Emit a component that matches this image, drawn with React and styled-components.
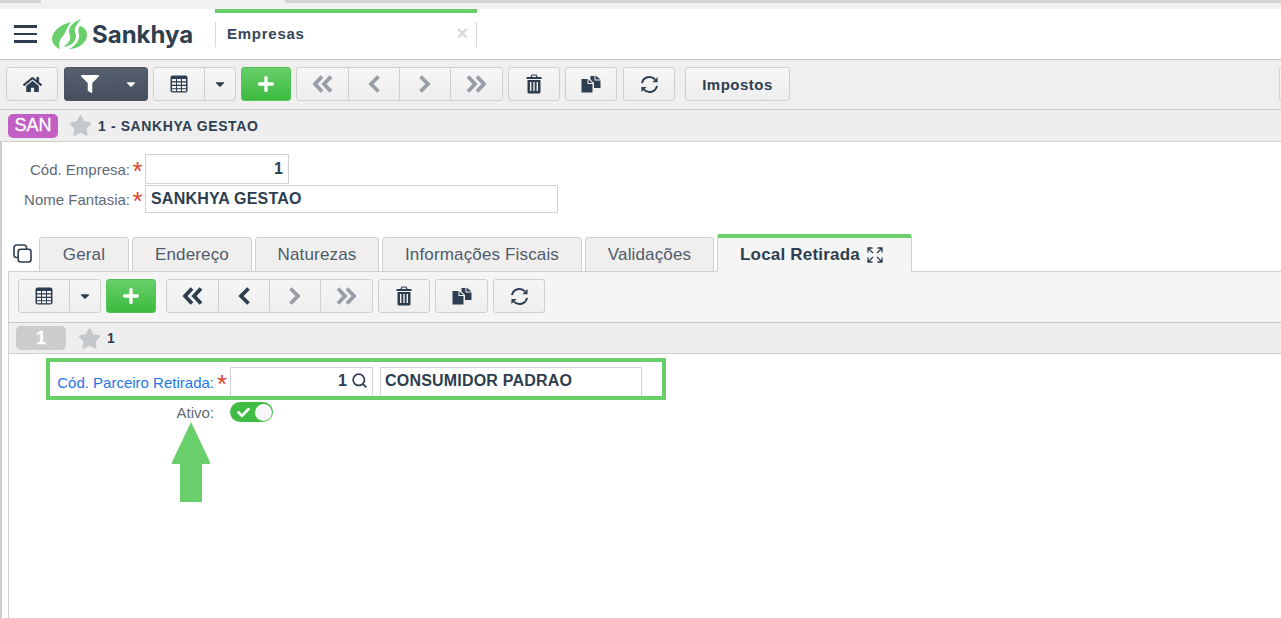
import React from 'react';
import styled, { createGlobalStyle } from 'styled-components';
import { FaHome, FaFilter, FaPlus, FaStar, FaCheck, FaCaretDown } from 'react-icons/fa';
import { Search } from 'lucide-react';

const Global = createGlobalStyle`
  html, body { margin: 0; padding: 0; background: #fff; }
  body { font-family: "Liberation Sans", Arial, sans-serif; color: #2d3e50; }
  * { box-sizing: border-box; }
`;

const Page = styled.div`
  position: relative;
  width: 1281px;
  height: 618px;
  overflow: hidden;
  display: flex;
  flex-direction: column;
`;

const BrowserStrip = styled.div`
  height: 9px;
  flex: none;
  background: #f0f0f0;
  display: flex;
  align-items: flex-start;
`;

const BrowserTab = styled.div`
  height: 3px;
  width: ${p => p.$w};
  flex: ${p => (p.$grow ? 1 : 'none')};
  background: ${p => (p.$active ? '#f2f2f2' : '#d2d2d2')};
`;

const Header = styled.header`
  height: 51px;
  flex: none;
  background: #fff;
  border-bottom: 1px solid #c4c4c2;
  display: flex;
  align-items: center;
  padding-left: 14px;
`;

const Burger = styled.div`
  width: 23px;
  display: flex;
  flex-direction: column;
  gap: 5px;
  margin-right: 15px;
  span { display: block; height: 2.5px; background: #2d3e50; }
`;

const LogoText = styled.span`
  font-family: "Inter", "Open Sans", sans-serif;
  font-weight: 700;
  font-size: 24px;
  color: #2f3f50;
  margin-left: 5px;
  width: 123px;
`;

const AppTab = styled.div`
  position: relative;
  width: 262px;
  height: 50px;
  display: flex;
  align-items: center;
  &::before {
    content: '';
    position: absolute;
    top: 0;
    left: 0;
    right: 0;
    height: 4px;
    background: #68cf6a;
  }
`;

const AppTabInner = styled.div`
  margin-top: 1px;
  height: 25px;
  width: 100%;
  border-left: 1px solid #d5d8dc;
  border-right: 1px solid #d5d8dc;
  display: flex;
  align-items: center;
  justify-content: space-between;
  padding: 0 7px 2px 11px;
  font-size: 15px;
  font-weight: 700;
  letter-spacing: 0.75px;
  color: #34465a;
`;

const CloseX = styled.span`
  font-size: 20px;
  font-weight: 700;
  color: #d6d8da;
`;

const Toolbar = styled.div`
  flex: none;
  height: ${p => p.$h};
  background: ${p => p.$bg};
  border-bottom: 1px solid #c9c9c7;
  display: flex;
  align-items: flex-start;
  padding: ${p => p.$pad};
`;

const Btn = styled.button`
  width: ${p => p.$w || 52}px;
  height: 34px;
  flex: none;
  margin-left: ${p => p.$ml || 0}px;
  padding: 0;
  display: flex;
  align-items: center;
  justify-content: center;
  border: 1px solid #cfcfcf;
  border-radius: 3px;
  background: linear-gradient(#f6f6f6, #eeeeee);
  color: ${p => (p.$muted ? '#979ea8' : '#2d3e50')};
  font-family: inherit;
  font-size: 15px;
  font-weight: 700;
  letter-spacing: 0.5px;
`;

const Group = styled.div`
  display: flex;
  flex: none;
  margin-left: ${p => p.$ml || 0}px;
  ${Btn} { border-radius: 0; margin-left: -1px; }
  ${Btn}:first-child { border-radius: 3px 0 0 3px; margin-left: 0; }
  ${Btn}:last-child { border-radius: 0 3px 3px 0; }
`;

const DarkBtn = styled(Btn)`
  background: linear-gradient(#56606f, #454f5d);
  border-color: #4a5462;
  color: #fff;
`;

const AddBtn = styled(Btn)`
  background: linear-gradient(#68cf6a, #3bbb3f);
  border-color: #55c458;
  color: #fff;
`;

const InfoBar = styled.div`
  flex: none;
  height: ${p => p.$h || 32}px;
  background: #eeeeee;
  border-bottom: 1px solid #cfcfcf;
  display: flex;
  align-items: center;
`;

const Badge = styled.span`
  width: 50px;
  height: ${p => p.$h}px;
  margin-left: ${p => p.$ml}px;
  border-radius: 5px;
  background: ${p => p.$bg};
  color: #fff;
  display: flex;
  align-items: center;
  justify-content: center;
  font-size: 18px;
  -webkit-text-stroke: 0.3px #fff;
  font-weight: ${p => p.$fw || 400};
`;

const StarIcon = styled(FaStar)`
  color: #c4c7cc;
  font-size: 23px;
  margin-left: ${p => p.$ml}px;
`;

const InfoText = styled.span`
  font-size: 14px;
  font-weight: 700;
  letter-spacing: ${p => p.$ls || 0}px;
  color: #2d3e50;
  margin-left: ${p => p.$ml}px;
`;

const Body = styled.div`
  flex: 1;
  min-height: 0;
  border-left: 2px solid #cfcfcf;
  display: flex;
  flex-direction: column;
`;

const Master = styled.div`
  flex: none;
  height: 91px;
  padding-top: 12px;
  display: flex;
  flex-direction: column;
  gap: 1px;
`;

const FormRow = styled.div`
  display: flex;
  align-items: center;
  height: ${p => p.$h}px;
  margin-top: ${p => p.$mt || 0}px;
`;

const Label = styled.label`
  width: ${p => p.$w}px;
  flex: none;
  text-align: right;
  font-size: 15px;
  color: ${p => p.$c || '#5f6a77'};
`;

const Req = styled.span`
  width: ${p => p.$w || 15}px;
  flex: none;
  text-align: center;
  font-size: 26px;
  line-height: 22px;
  height: 18px;
  color: #e0452c;
  font-weight: 400;
`;

const Field = styled.div`
  width: ${p => p.$w}px;
  height: ${p => p.$h || 30}px;
  margin-left: ${p => p.$ml || 0}px;
  flex: none;
  border: 1px solid #d2d2d2;
  background: #fff;
  display: flex;
  align-items: center;
  justify-content: ${p => (p.$right ? 'flex-end' : 'flex-start')};
  padding: ${p => p.$pad || '0 5px'};
  font-size: 16px;
  font-weight: 700;
  letter-spacing: 0.2px;
  color: #2d3e50;
  white-space: nowrap;
`;

const FieldValue = styled.span`
  margin-left: auto;
`;

const TabBar = styled.div`
  flex: none;
  height: 38px;
  display: flex;
  align-items: flex-end;
  padding-left: 11px;
  position: relative;
  z-index: 1;
`;

const CopyWrap = styled.div`
  width: 26px;
  height: 36px;
  flex: none;
  color: #2d3e50;
  display: flex;
  align-items: center;
`;

const Tab = styled.div`
  width: ${p => p.$w}px;
  height: ${p => (p.$active ? 38 : 35)}px;
  margin-right: ${p => (p.$active ? 0 : 3)}px;
  padding-right: ${p => (p.$active ? 6 : 0)}px;
  flex: none;
  display: flex;
  align-items: center;
  justify-content: center;
  gap: 7px;
  background: ${p => (p.$active ? '#f5f5f5' : '#f0efee')};
  border: 1px solid #cfcfcf;
  border-top: ${p => (p.$active ? '4px solid #68cf6a' : '1px solid #cfcfcf')};
  border-bottom: ${p => (p.$active ? '1px solid #f5f5f5' : '1px solid #cfcfcf')};
  border-radius: 3px 3px 0 0;
  font-size: 17px;
  letter-spacing: ${p => (p.$active ? 0.2 : 0.15)}px;
  font-weight: ${p => (p.$active ? 700 : 400)};
  color: ${p => (p.$active ? '#2d3e50' : '#4e5b6b')};
  margin-bottom: -1px;
`;

const Detail = styled.div`
  flex: 1;
  margin-left: 6px;
  border-left: 1px solid #cfcfcf;
  border-top: 1px solid #cfcfcf;
  display: flex;
  flex-direction: column;
`;

const DetailForm = styled.div`
  flex: 1;
  padding-top: 13px;
  display: flex;
  flex-direction: column;
`;

const SearchIcon = styled(Search)`
  margin-left: 4px;
  margin-right: -1px;
  color: #2d3e50;
`;

const Switch = styled.div`
  width: 43px;
  height: 20px;
  margin-left: 16px;
  border-radius: 10px;
  background: #3fbc43;
  display: flex;
  align-items: center;
  justify-content: space-between;
  padding: 0 1px 0 7px;
  color: #fff;
  font-size: 13px;
  i { width: 17px; height: 17px; border-radius: 50%; background: #f7f7f7; display: block; }
`;

const Highlight = styled.div`
  position: absolute;
  left: 46px;
  top: 358px;
  width: 620px;
  height: 42px;
  border: 4px solid #68cf6a;
  pointer-events: none;
`;

const ArrowSvg = styled.svg`
  position: absolute;
  left: 170px;
  top: 422px;
`;

const Logo = () => (
  <svg width="35" height="30" viewBox="0 0 35 30" fill="#68cf6a">
    <path d="M19 3 C10 5 1 11 0 19 C0 24 3 28 8 30 C6 24 8 20 11 17 C14 13 15 8 19 3Z" />
    <path d="M29 0 C23 2 17 7 17 12 C17 16 19 17 18 20 C17 24 13 26 12 28 C18 27 23 24 24 18 C24 14 22 12 23 9 C24 6 27 3 29 0Z" />
    <path d="M28 7 C26 10 26 12 27 15 C28 20 25 26 17 30 C26 30 35 24 35 16 C35 11 32 8 28 7Z" />
  </svg>
);

const GridIcon = () => (
  <svg width="18" height="18" viewBox="0 0 18 18">
    <rect x="0.5" y="0.5" width="17" height="17" rx="2" fill="#2d3e50" />
    <g fill="#f3f3f3">
      <rect x="2" y="4" width="4" height="2.2" /><rect x="7" y="4" width="4" height="2.2" /><rect x="12" y="4" width="4" height="2.2" />
      <rect x="2" y="7.5" width="4" height="2.2" /><rect x="7" y="7.5" width="4" height="2.2" /><rect x="12" y="7.5" width="4" height="2.2" />
      <rect x="2" y="11" width="4" height="2.2" /><rect x="7" y="11" width="4" height="2.2" /><rect x="12" y="11" width="4" height="2.2" />
      <rect x="2" y="14.2" width="4" height="2" /><rect x="7" y="14.2" width="4" height="2" /><rect x="12" y="14.2" width="4" height="2" />
    </g>
  </svg>
);

const TrashIcon = () => (
  <svg width="16" height="20" viewBox="0 0 16 20" fill="#2d3e50">
    <path d="M5.5 0.5h5l1 2.5H15.5v2H0.5V3H4.5z M6.3 1.6 L5.9 3h4.2l-.4-1.4z" fillRule="evenodd" />
    <path d="M1.5 6h13v12a1.5 1.5 0 0 1-1.5 1.5H3A1.5 1.5 0 0 1 1.5 18z M4 8v9h1.4V8z M7.3 8v9h1.4V8z M10.6 8v9H12V8z" fillRule="evenodd" />
  </svg>
);

const FilesIcon = () => (
  <svg width="20" height="18" viewBox="0 0 20 18" fill="#2d3e50">
    <path d="M9.5 1 H13.5 V5.5 H19.5 V13 H13 V8 L9.5 4.5z" />
    <path d="M14.5 0.5 L19.5 4.5 H14.5z" />
    <path d="M0.5 4 H6.5 V9 H11.5 V17.5 H0.5z" />
    <path d="M7.5 4.2 L11.3 8 H7.5z" />
  </svg>
);

const RefreshIcon = () => (
  <svg width="19" height="19" viewBox="0 0 20 20" fill="none" stroke="#2d3e50" strokeWidth="2.1">
    <path d="M2.1 8.5 A8 8 0 0 1 15.8 4.6" />
    <path d="M17.9 11.5 A8 8 0 0 1 4.2 15.4" />
    <path d="M18.5 2 V7.5 H13z" fill="#2d3e50" stroke="none" />
    <path d="M1.5 18 V12.5 H7z" fill="#2d3e50" stroke="none" />
  </svg>
);

const CopyIcon = () => (
  <svg width="19" height="19" viewBox="0 0 19 19" fill="none" stroke="#2d3e50" strokeWidth="1.6">
    <rect x="5.2" y="5.2" width="12.8" height="12.8" rx="2.5" />
    <path d="M5 13.5 H3.5 A2.5 2.5 0 0 1 1 11 V3.5 A2.5 2.5 0 0 1 3.5 1 H11 A2.5 2.5 0 0 1 13.5 3.5 V5" />
  </svg>
);

const ExpandIcon = () => (
  <svg width="16" height="16" viewBox="0 0 16 16" fill="none" stroke="#2d3e50" strokeWidth="1.3">
    <path d="M1 5.5V1h4.5M1 1l5 5M10.5 1H15v4.5M15 1l-5 5M1 10.5V15h4.5M1 15l5-5M15 10.5V15h-4.5M15 15l-5-5" />
  </svg>
);

// chevrons drawn because the FA angles are too thin for these buttons
const Chevron = ({ dir, double }) => (
  <svg width={double ? 21 : 14} height="18" viewBox={double ? '0 0 21 18' : '0 0 14 18'} fill="none" stroke="currentColor" strokeWidth="3.8">
    {dir === 'left' && !double && <path d="M11.5 1.5 L4 9 L11.5 16.5" />}
    {dir === 'right' && !double && <path d="M2.5 1.5 L10 9 L2.5 16.5" />}
    {dir === 'left' && double && <><path d="M10 1.5 L3 9 L10 16.5" /><path d="M19 1.5 L12 9 L19 16.5" /></>}
    {dir === 'right' && double && <><path d="M2 1.5 L9 9 L2 16.5" /><path d="M11 1.5 L18 9 L11 16.5" /></>}
  </svg>
);

const Caret = styled(FaCaretDown)`
  font-size: 14px;
`;

const Arrow = () => (
  <ArrowSvg width="42" height="82" viewBox="0 0 42 82">
    <path d="M21 0 L40 40 V42 H32 V80 H10 V42 H2 V40 Z" fill="#68cf6a" />
  </ArrowSvg>
);

const App = () => (
  <Page>
    <Global />
    <BrowserStrip>
      <BrowserTab $w="41px" />
      <BrowserTab $w="244px" $active />
      <BrowserTab $grow />
    </BrowserStrip>

    <Header>
      <Burger><span /><span /><span /></Burger>
      <Logo />
      <LogoText>Sankhya</LogoText>
      <AppTab>
        <AppTabInner>
          Empresas
          <CloseX>×</CloseX>
        </AppTabInner>
      </AppTab>
    </Header>

    <Toolbar $h="50px" $bg="#f0efee" $pad="7px 0 0 6px">
      <Btn><FaHome size={19} /></Btn>
      <Group $ml={6}>
        <DarkBtn $w={51}><FaFilter size={18} /></DarkBtn>
        <DarkBtn $w={34}><Caret /></DarkBtn>
      </Group>
      <Group $ml={5}>
        <Btn $w={52}><GridIcon /></Btn>
        <Btn $w={32}><Caret /></Btn>
      </Group>
      <AddBtn $ml={5} $w={50}><FaPlus size={18} /></AddBtn>
      <Group $ml={5}>
        <Btn $muted $w={53}><Chevron dir="left" double /></Btn>
        <Btn $muted $w={52}><Chevron dir="left" /></Btn>
        <Btn $muted $w={52}><Chevron dir="right" /></Btn>
        <Btn $muted $w={53}><Chevron dir="right" double /></Btn>
      </Group>
      <Btn $ml={5}><TrashIcon /></Btn>
      <Btn $ml={5}><FilesIcon /></Btn>
      <Btn $ml={6}><RefreshIcon /></Btn>
      <Btn $ml={10} $w={105}>Impostos</Btn>
      <Btn $ml={489} $w={20} />
    </Toolbar>

    <InfoBar $h={32}>
      <Badge $ml={8} $h={24} $bg="#c15fc4">SAN</Badge>
      <StarIcon $ml={11} />
      <InfoText $ml={6} $ls={0.6}>1 - SANKHYA GESTAO</InfoText>
    </InfoBar>

    <Body>
      <Master>
        <FormRow $h={30}>
          <Label $w={128}>Cód. Empresa:</Label>
          <Req>*</Req>
          <Field $w={144} $right>1</Field>
        </FormRow>
        <FormRow $h={28}>
          <Label $w={128}>Nome Fantasia:</Label>
          <Req>*</Req>
          <Field $w={413} $h={28}>SANKHYA GESTAO</Field>
        </FormRow>
      </Master>

      <TabBar>
        <CopyWrap><CopyIcon /></CopyWrap>
        <Tab $w={90}>Geral</Tab>
        <Tab $w={120}>Endereço</Tab>
        <Tab $w={124}>Naturezas</Tab>
        <Tab $w={200}>Informações Fiscais</Tab>
        <Tab $w={129}>Validações</Tab>
        <Tab $w={195} $active>Local Retirada <ExpandIcon /></Tab>
      </TabBar>

      <Detail>
        <Toolbar $h="51px" $bg="#f5f5f5" $pad="7px 0 0 9px">
          <Group>
            <Btn $w={52}><GridIcon /></Btn>
            <Btn $w={32}><Caret /></Btn>
          </Group>
          <AddBtn $ml={5} $w={50}><FaPlus size={18} /></AddBtn>
          <Group $ml={10}>
            <Btn $w={53}><Chevron dir="left" double /></Btn>
            <Btn $w={52}><Chevron dir="left" /></Btn>
            <Btn $muted $w={52}><Chevron dir="right" /></Btn>
            <Btn $muted $w={53}><Chevron dir="right" double /></Btn>
          </Group>
          <Btn $ml={5}><TrashIcon /></Btn>
          <Btn $ml={5} $w={53}><FilesIcon /></Btn>
          <Btn $ml={5}><RefreshIcon /></Btn>
        </Toolbar>

        <InfoBar $h={31}>
          <Badge $ml={7} $h={24} $bg="#cccccc" $fw={700}>1</Badge>
          <StarIcon $ml={12} />
          <InfoText $ml={6}>1</InfoText>
        </InfoBar>

        <DetailForm>
          <FormRow $h={30}>
            <Label $w={205} $c="#2575e8">Cód. Parceiro Retirada:</Label>
            <Req $w={16}>*</Req>
            <Field $w={143} $pad="0 5px 3px">
              <FieldValue>1</FieldValue>
              <SearchIcon size={17} strokeWidth={2.4} />
            </Field>
            <Field $w={262} $ml={7} $pad="0 4px 3px">CONSUMIDOR PADRAO</Field>
          </FormRow>
          <FormRow $h={26} $mt={2}>
            <Label $w={205}>Ativo:</Label>
            <Switch><FaCheck /><i /></Switch>
          </FormRow>
        </DetailForm>
      </Detail>
    </Body>

    <Highlight />
    <Arrow />
  </Page>
);

export default App;
